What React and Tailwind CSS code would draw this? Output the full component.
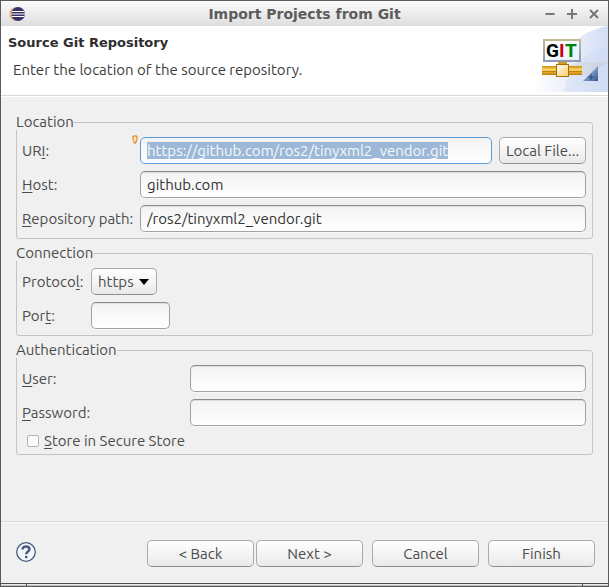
import { useEffect, useRef } from "react";

const fieldBase =
  "h-[27px] min-w-0 rounded-[5px] border bg-linear-to-b from-[#f3f3f3] to-white px-1.5 text-[15px] text-[#333333] outline-none";
const field =
  fieldBase +
  " border-[#a3a3a3] border-t-[#8a8a8a] shadow-[inset_0_1px_1px_#dcdcdc,0_1px_0_#f8f8f8]";
const button =
  "h-[27px] rounded-[5px] border border-[#aaaaaa] border-b-[#8f8f8f] bg-linear-to-b from-white to-[#e9e9e9] text-center text-[15px] leading-5 whitespace-nowrap text-[#4c4c4c]";

function Mnemonic({ children }) {
  return <span className="underline underline-offset-2">{children}</span>;
}

function Group({ title, children }) {
  return (
    <fieldset className="min-w-0 rounded-[3px] border border-[#c4c4c4] pt-[7px] pr-1.5 pb-1.5 pl-[5px]">
      <legend className="-ml-1.5 text-[15px] leading-4">{title}</legend>
      <div className="flex flex-col gap-[7px]">{children}</div>
    </fieldset>
  );
}

function EclipseIcon() {
  return (
    <svg className="h-4 w-4" viewBox="0 0 16 16" aria-hidden="true">
      <circle cx="7.4" cy="8" r="7" fill="#f7941e" />
      <circle cx="8.6" cy="8" r="7.2" fill="#eeeeee" />
      <circle cx="9" cy="8" r="6.9" fill="#3a3168" />
      <path d="M3 5.500h12M2 8h14M3 10.500h12" stroke="#ffffff" strokeWidth="1.200" />
    </svg>
  );
}

function GitBanner() {
  return (
    <svg className="h-[66px] w-[76px]" viewBox="0 0 76 66" aria-hidden="true">
      <defs>
        <linearGradient id="sky" x1="0" y1="0" x2="1" y2="0">
          <stop offset="0" stopColor="#ffffff" />
          <stop offset="1" stopColor="#d3def5" />
        </linearGradient>
        <linearGradient id="pipe" x1="0" y1="0" x2="0" y2="1">
          <stop offset="0" stopColor="#c88a0c" />
          <stop offset="0.4" stopColor="#ffd667" />
          <stop offset="1" stopColor="#c07c00" />
        </linearGradient>
        <linearGradient id="hub" x1="0" y1="0" x2="1" y2="1">
          <stop offset="0" stopColor="#ffffff" />
          <stop offset="1" stopColor="#f5cf62" />
        </linearGradient>
        <linearGradient id="frame" x1="0" y1="0" x2="0" y2="1">
          <stop offset="0" stopColor="#c0b890" />
          <stop offset="1" stopColor="#8e9ab8" />
        </linearGradient>
        <linearGradient id="panel" x1="0" y1="0" x2="1" y2="1">
          <stop offset="0" stopColor="#ffffff" />
          <stop offset="1" stopColor="#e2f0f8" />
        </linearGradient>
        <linearGradient id="shade" x1="0" y1="0" x2="1" y2="0">
          <stop offset="0" stopColor="#ffffff" />
          <stop offset="0.5" stopColor="#dcdfe6" />
          <stop offset="1" stopColor="#c3cadb" />
        </linearGradient>
        <linearGradient id="corner" x1="0" y1="0" x2="1" y2="1">
          <stop offset="0.3" stopColor="#9cb6dc" />
          <stop offset="1" stopColor="#33558f" />
        </linearGradient>
      </defs>
      <path d="M76 0C54 4 40 14 34 32L8 49Q3 55 1 66H76Z" fill="url(#sky)" />
      <path d="M76 21Q50 24 36 50L32 66H76Z" fill="#c9d8f4" opacity="0.35" />
      <path d="M48 36H76L56 50H6L10 46Z" fill="url(#shade)" opacity="0.7" />
      <rect x="12" y="14" width="36" height="21" fill="url(#panel)" stroke="url(#frame)" strokeWidth="2" />
      <g fontFamily="Roboto, sans-serif" fontSize="19" fontWeight="700">
        <text x="14" y="31" fill="#000000">G</text>
        <text x="27" y="31" fill="#cc0010">I</text>
        <text x="33" y="31" fill="#00820a">T</text>
      </g>
      <path d="M26 36h9v4h-9z" fill="#d39a20" />
      <rect x="10" y="40" width="40" height="9" fill="url(#pipe)" />
      <path d="M10 45.500h40" stroke="#c08410" />
      <rect x="24.500" y="38.500" width="12" height="12" fill="url(#hub)" stroke="#a86c08" />
      <path d="M66 40V55H51Z" fill="url(#corner)" />
      <path d="M59 48v6M56 51h6" stroke="#294a80" />
    </svg>
  );
}

export default function App() {
  const uri = useRef(null);

  useEffect(() => {
    uri.current.focus();
    uri.current.select();
  }, []);

  return (
    <div className="flex min-h-screen flex-col border border-[#5a5a5a] bg-[#f0f0f0] font-['Ubuntu','Noto_Sans',sans-serif] text-[15px] leading-[23px] text-[#4c4c4c]">
      <header className="flex h-[25px] items-center bg-linear-to-b from-[#fbfbfb] to-[#dedede] pr-2 pl-2">
        <div className="flex flex-1">
          <EclipseIcon />
        </div>
        <h1 className="font-['DejaVu_Sans',sans-serif] text-sm leading-4 font-bold text-[#5c5c5c]">
          Import Projects from Git
        </h1>
        <div className="flex flex-1 justify-end gap-2.5 text-[#777777]">
          <button type="button" aria-label="Minimize">
            <svg className="h-3 w-3" viewBox="0 0 12 12" stroke="currentColor" strokeWidth="2">
              <path d="M1.500 6h9" />
            </svg>
          </button>
          <button type="button" aria-label="Maximize">
            <svg className="h-3 w-3" viewBox="0 0 12 12" stroke="currentColor" strokeWidth="2">
              <path d="M1 6h10M6 1v10" />
            </svg>
          </button>
          <button type="button" aria-label="Close">
            <svg className="h-3 w-3" viewBox="0 0 12 12" stroke="currentColor" strokeWidth="2">
              <path d="M2 2l8 8M10 2l-8 8" />
            </svg>
          </button>
        </div>
      </header>

      <section className="flex h-[71px] items-start justify-between border-b border-white bg-white shadow-[inset_0_-1px_0_#d8d8d8]">
        <div className="pt-[7px] pl-[7px]">
          <h2 className="font-['DejaVu_Sans',sans-serif] text-[13px] leading-5 font-bold text-[#2e2e2e]">
            Source Git Repository
          </h2>
          <p className="pt-[7px] pl-[5px] leading-5 text-[#3c3c3c]">
            Enter the location of the source repository.
          </p>
        </div>
        <GitBanner />
      </section>

      <form className="flex flex-1 flex-col" onSubmit={(e) => e.preventDefault()}>
        <div className="flex flex-1 flex-col gap-1.5 pt-[17px] pr-[15px] pb-4 pl-[15px]">
          <Group title="Location">
            <div className="flex items-center">
              <label htmlFor="uri" className="w-[118px]">
                UR<Mnemonic>I</Mnemonic>:
              </label>
              <div className="relative flex flex-1">
                <svg className="absolute -top-0.5 -left-2 h-[9px] w-[6px]" viewBox="0 0 6 9" aria-hidden="true">
                  <path d="M1 1h4v4L4 6v2H2V6L1 5z" fill="#ffe9b0" stroke="#d9781c" />
                </svg>
                <input
                  id="uri"
                  ref={uri}
                  defaultValue="https://github.com/ros2/tinyxml2_vendor.git"
                  className={
                    fieldBase +
                    " flex-1 border-[#5b9bd5] selection:bg-[#9cb8d6] selection:text-[#f4f8fc]"
                  }
                />
              </div>
              <button type="button" className={button + " ml-[7px] w-[87px]"}>
                Local File...
              </button>
            </div>
            <div className="flex items-center">
              <label htmlFor="host" className="w-[118px]">
                <Mnemonic>H</Mnemonic>ost:
              </label>
              <input id="host" defaultValue="github.com" className={field + " flex-1"} />
            </div>
            <div className="flex items-center">
              <label htmlFor="path" className="w-[118px] whitespace-nowrap">
                <Mnemonic>R</Mnemonic>epository path:
              </label>
              <input id="path" defaultValue="/ros2/tinyxml2_vendor.git" className={field + " flex-1"} />
            </div>
          </Group>

          <Group title="Connection">
            <div className="flex items-center">
              <label htmlFor="protocol" className="w-[69px]">
                Protoco<Mnemonic>l</Mnemonic>:
              </label>
              <div className="relative">
                <select id="protocol" className={button + " w-[66px] appearance-none pl-1.5 text-left"}>
                  <option>https</option>
                </select>
                <svg
                  className="pointer-events-none absolute top-[11px] right-2 h-[6px] w-[10px]"
                  viewBox="0 0 10 6"
                  aria-hidden="true"
                >
                  <path d="M0 0h10L5 6z" fill="#000000" />
                </svg>
              </div>
            </div>
            <div className="flex items-center">
              <label htmlFor="port" className="w-[69px]">
                Por<Mnemonic>t</Mnemonic>:
              </label>
              <input id="port" className={field + " w-[79px]"} />
            </div>
          </Group>

          <Group title="Authentication">
            <div className="flex items-center">
              <label htmlFor="user" className="w-[168px]">
                <Mnemonic>U</Mnemonic>ser:
              </label>
              <input id="user" className={field + " flex-1"} />
            </div>
            <div className="flex items-center">
              <label htmlFor="password" className="w-[168px]">
                <Mnemonic>P</Mnemonic>assword:
              </label>
              <input id="password" type="password" className={field + " flex-1"} />
            </div>
            <div className="flex h-[15px] items-center gap-[5px] pl-[5px]">
              <input
                id="store"
                type="checkbox"
                className="h-3 w-3 appearance-none rounded-[2px] border border-[#b4b4b4] bg-[#fafafa]"
              />
              <label htmlFor="store">
                <Mnemonic>S</Mnemonic>tore in Secure Store
              </label>
            </div>
          </Group>
        </div>

        <footer className="flex items-center border-t border-[#d8d8d8] pt-[18px] pr-[13px] pb-4 pl-[15px] shadow-[inset_0_1px_0_#fbfbfb]">
          <button type="button" aria-label="Help" className="-mt-1 mr-auto">
            <svg className="h-5 w-5" viewBox="0 0 20 20" fill="none" stroke="#475a82">
              <circle cx="10" cy="10" r="9.300" strokeWidth="1.300" fill="#f6f7f9" />
              <path d="M6.500 7.600C6.500 5.500 8 4.500 10 4.500c2.200 0 3.500 1 3.500 2.800 0 2.300-3.300 2.200-3.300 5" strokeWidth="2.400" />
              <path d="M10.200 13.900v2.300" strokeWidth="2.500" />
            </svg>
          </button>
          <button type="button" className={button + " w-[107px]"}>&lt; Back</button>
          <button type="button" className={button + " ml-0.5 w-[107px]"}>Next &gt;</button>
          <button type="button" className={button + " ml-[9px] w-[107px]"}>Cancel</button>
          <button type="submit" className={button + " ml-[9px] w-[107px]"}>Finish</button>
        </footer>
      </form>

      <div className="flex h-[3px] border-t border-[#4e4e4e]">
        <div className="w-[26px] border-r border-[#4e4e4e] bg-linear-to-b from-white to-[#aaaaaa]" />
        <div className="flex-1 border-r border-[#4e4e4e] bg-linear-to-b from-white to-[#aaaaaa]" />
        <div className="w-[25px] bg-linear-to-b from-white to-[#aaaaaa]" />
      </div>
    </div>
  );
}
